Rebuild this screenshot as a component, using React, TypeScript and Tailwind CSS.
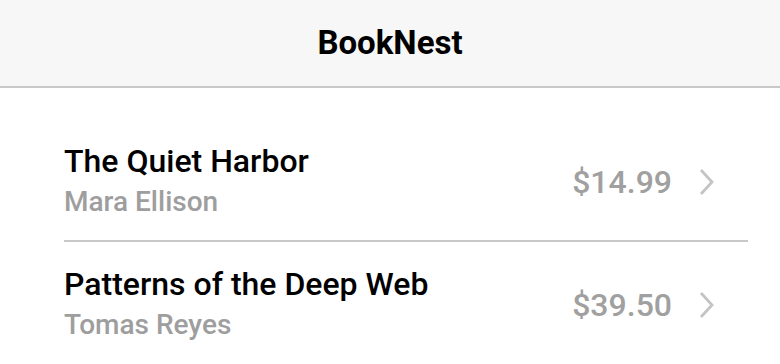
const books = [
  { title: "The Quiet Harbor", author: "Mara Ellison", price: "$14.99" },
  { title: "Patterns of the Deep Web", author: "Tomas Reyes", price: "$39.50" },
];

function Chevron() {
  return (
    <svg width="18" height="28" viewBox="0 0 18 28" fill="none" className="text-[#c4c4c4]">
      <path d="M3 2 L14 14 L3 26" stroke="currentColor" strokeWidth="2.8" />
    </svg>
  );
}

export default function App() {
  return (
    <div className="min-h-screen bg-white font-['Roboto',sans-serif]">
      <header className="flex h-[88px] items-center justify-center border-b-2 border-[#c8c8c8] bg-[#f7f7f7]">
        <h1 className="text-[33px] font-bold text-black">BookNest</h1>
      </header>
      <ul className="pl-16 pr-8 pt-[31px]">
        {books.map((b, i) => (
          <li
            key={b.title}
            className={`flex items-center justify-between py-5 ${i === 0 ? "border-b-2 border-[#c8c8c8]" : ""}`}
          >
            <div className="flex flex-col">
              <span className="text-[32px] font-medium leading-[45px] text-black">{b.title}</span>
              <span className="text-[28px] font-medium leading-[36px] text-[#9e9e9e]">{b.author}</span>
            </div>
            <div className="mt-1 flex items-center gap-[26px] pr-[32px]">
              <span className="text-[32px] font-medium text-[#a0a0a0]">{b.price}</span>
              <Chevron />
            </div>
          </li>
        ))}
      </ul>
    </div>
  );
}
